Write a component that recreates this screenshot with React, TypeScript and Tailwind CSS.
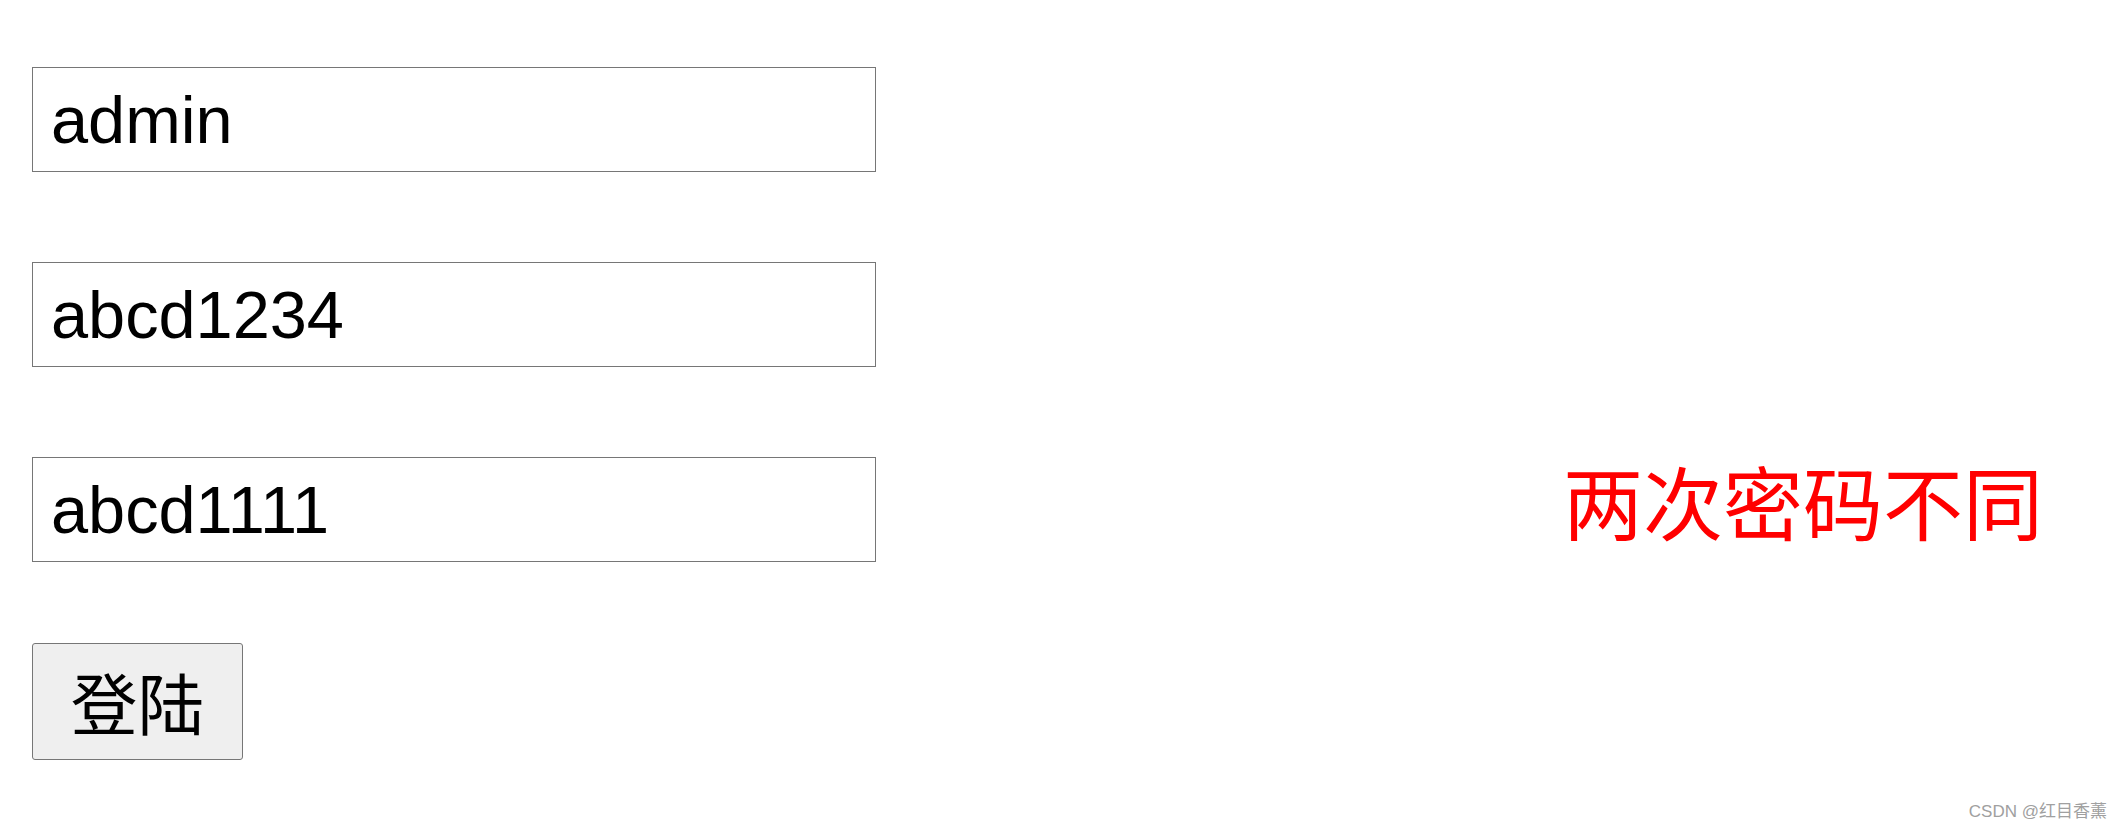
import React from "react";

const inputCls =
  "block w-[844px] h-[105px] border border-[#767676] bg-white pl-[18px] pr-[18px] text-[66.7px] text-black outline-none [font-family:'Liberation_Sans',Arial,sans-serif]";

export default function App() {
  return (
    <div className="relative w-[2122px] h-[830px] bg-white overflow-hidden [font-family:'Liberation_Sans','Noto_Sans_CJK_SC',sans-serif]">
      <div className="flex flex-col pt-[67px] pl-[32px]">
        <input className={inputCls} defaultValue="admin" readOnly />
        <input className={`${inputCls} mt-[90px]`} defaultValue="abcd1234" readOnly />
        <div className="flex items-center mt-[90px]">
          <input className={inputCls} defaultValue="abcd1111" readOnly />
          <span className="ml-[687px] mb-[22px] text-[80px] leading-none text-[#ff0000] [font-family:'Noto_Sans_CJK_SC',sans-serif]">
            两次密码不同
          </span>
        </div>
        <div className="mt-[81px]">
          <button className="w-[211px] h-[117px] rounded-[3px] border border-[#767676] bg-[#efefef] text-[66.7px] leading-none text-black [font-family:'Noto_Sans_CJK_SC',sans-serif]">
            登陆
          </button>
        </div>
      </div>
      <div className="absolute right-[15px] bottom-[10px] text-[17px] leading-none text-[#a0a0a0] [font-family:'Liberation_Sans','Noto_Sans_CJK_SC',sans-serif]">
        CSDN @红目香薰
      </div>
    </div>
  );
}
